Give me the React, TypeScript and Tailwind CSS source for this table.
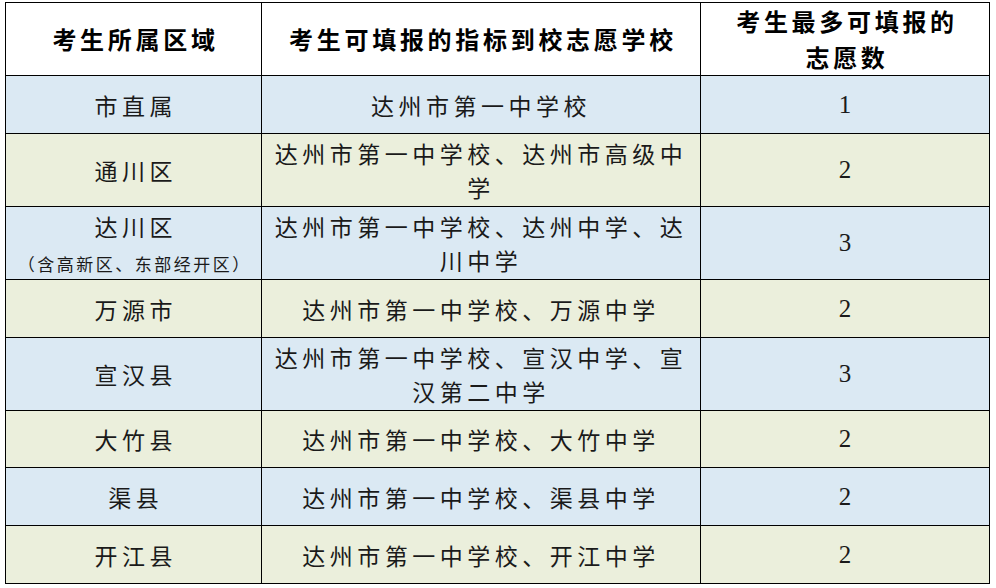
const rows = [
  { area: ["市直属"], schools: ["达州市第一中学校"], count: "1", tone: "blue" },
  { area: ["通川区"], schools: ["达州市第一中学校、达州市高级中", "学"], count: "2", tone: "green" },
  { area: ["达川区"], note: "（含高新区、东部经开区）", schools: ["达州市第一中学校、达州中学、达", "川中学"], count: "3", tone: "blue" },
  { area: ["万源市"], schools: ["达州市第一中学校、万源中学"], count: "2", tone: "green" },
  { area: ["宣汉县"], schools: ["达州市第一中学校、宣汉中学、宣", "汉第二中学"], count: "3", tone: "blue" },
  { area: ["大竹县"], schools: ["达州市第一中学校、大竹中学"], count: "2", tone: "green" },
  { area: ["渠县"], schools: ["达州市第一中学校、渠县中学"], count: "2", tone: "blue" },
  { area: ["开江县"], schools: ["达州市第一中学校、开江中学"], count: "2", tone: "green" },
];

const cjk = "font-['Noto_Sans_CJK_SC',sans-serif]";

export default function App() {
  return (
    <div className="min-h-screen bg-white pt-[2px] pl-[5px]">
      <div className="grid w-fit grid-cols-[255px_438px_288px] grid-rows-[72px_57px_72px_72px_57px_72px_56px_57px_57px] gap-px bg-black p-px text-[#1a1a1a]">
        <div className={`flex items-center justify-center bg-white pl-[4px] text-[24px] font-bold tracking-[3.7px] text-black ${cjk}`}>
          考生所属区域
        </div>
        <div className={`flex items-center justify-center bg-white pl-[4px] text-[24px] font-bold tracking-[3.7px] text-black ${cjk}`}>
          考生可填报的指标到校志愿学校
        </div>
        <div className={`flex items-center justify-center bg-white pl-[4px] text-center text-[24px] font-bold leading-[36px] tracking-[3.7px] text-black ${cjk}`}>
          <div>
            考生最多可填报的
            <br />
            志愿数
          </div>
        </div>

        {rows.map((r, i) => {
          const bg = r.tone === "blue" ? "bg-[#dbe9f3]" : "bg-[#ebefdc]";
          return [
            <div key={`a${i}`} className={`flex flex-col items-center justify-center ${bg} ${cjk}`}>
              <div className="pl-[4.5px] text-[23px] leading-[30px] tracking-[4.5px]">{r.area[0]}</div>
              {r.note && (
                <div className="mt-[12px] pl-[2.5px] text-[17px] leading-[22px] tracking-[2.5px]">{r.note}</div>
              )}
            </div>,
            <div key={`b${i}`} className={`flex items-center justify-center ${bg} text-center text-[23px] leading-[34px] tracking-[4.5px] ${cjk}`}>
              <div>
                {r.schools.map((s, j) => (
                  <div key={j}>{s}</div>
                ))}
              </div>
            </div>,
            <div key={`c${i}`} className={`flex items-center justify-center ${bg} font-['Liberation_Serif',serif] text-[25px]`}>
              {r.count}
            </div>,
          ];
        })}
      </div>
    </div>
  );
}
